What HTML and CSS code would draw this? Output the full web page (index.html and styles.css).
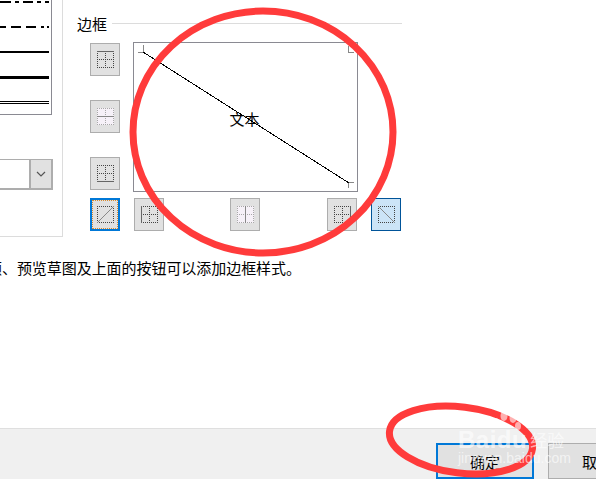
FILE: index.html
```html
<!DOCTYPE html>
<html lang="zh-CN">
<head>
    <meta charset="UTF-8">
    <meta name="viewport" content="width=device-width, initial-scale=1.0">
    <title>边框</title>
    <link rel="stylesheet" href="styles.css">
</head>
<body>
    <svg class="defs" width="0" height="0">
        <defs>
            <symbol id="grid" viewBox="0 0 17 17">
                <path d="M0 .5H17M0 16.500H17M.5 0V17M16.500 0V17M8.500 0V17M0 8.500H17" fill="none" stroke="currentColor" stroke-dasharray="1 1"/>
            </symbol>
            <symbol id="box" viewBox="0 0 17 17">
                <path d="M0 .5H17M0 16.500H17M.5 0V17M16.500 0V17" fill="none" stroke="currentColor" stroke-dasharray="1 1"/>
            </symbol>
        </defs>
    </svg>

    <div class="dialog">
        <div class="content">
            <div class="left-col">
                <div class="style-group">
                    <div class="line-list">
                        <svg width="49" height="106" viewBox="0 0 49 106">
                            <path d="M0 2H11M15 2H19M23 2H33M37 2H41M45 2H49" stroke="#000" stroke-width="2"/>
                            <path d="M0 27H6M11 27H21M26 27H36M41 27H44M47 27H49" stroke="#000" stroke-width="2"/>
                            <path d="M0 52H49" stroke="#000" stroke-width="2"/>
                            <path d="M0 77.5H49" stroke="#000" stroke-width="3"/>
                            <path d="M0 101.5H49M0 103.5H49" stroke="#000"/>
                        </svg>
                    </div>
                    <div class="combo">
                        <span class="combo-arrow">
                            <svg width="10" height="6" viewBox="0 0 10 6"><path d="M1 1L5 5L9 1" fill="none" stroke="#555" stroke-width="1.2"/></svg>
                        </span>
                    </div>
                </div>
                <p class="hint">颜、预览草图及上面的按钮可以添加边框样式。</p>
            </div>

            <div class="border-group">
                <div class="legend"><span>边框</span><i class="rule"></i></div>
                <div class="preview-row">
                    <div class="side-buttons">
                        <button class="icon-btn">
                            <svg width="17" height="17"><use href="#grid"/><path d="M0 .5H17" stroke="#666"/></svg>
                        </button>
                        <button class="icon-btn off">
                            <svg width="17" height="17"><rect width="17" height="17" fill="#f6f1f8"/><use href="#grid"/><path d="M0 8.500H17" stroke="#888"/></svg>
                        </button>
                        <button class="icon-btn">
                            <svg width="17" height="17"><use href="#grid"/><path d="M0 16.500H17" stroke="#666"/></svg>
                        </button>
                    </div>
                    <div class="preview">
                        <svg class="preview-lines" width="223" height="148" viewBox="0 0 223 148">
                            <path d="M9.500 2V10M4 9.500H10" stroke="#888" fill="none"/>
                            <path d="M214.500 3V9.500H220" stroke="#888" fill="none"/>
                            <path d="M220 139.500H214.500V145" stroke="#888" fill="none"/>
                            <path d="M9 9L215 140" stroke="#000" fill="none"/>
                        </svg>
                        <span class="preview-text">文本</span>
                    </div>
                </div>
                <div class="bottom-buttons">
                    <button class="icon-btn focused">
                        <svg width="17" height="17"><use href="#box"/><path d="M0 17L17 0" stroke="#888"/></svg>
                    </button>
                    <button class="icon-btn b-left">
                        <svg width="17" height="17"><use href="#grid"/><path d="M.5 0V17" stroke="#666"/></svg>
                    </button>
                    <button class="icon-btn off b-mid">
                        <svg width="17" height="17"><rect width="17" height="17" fill="#f6f1f8"/><use href="#grid"/><path d="M8.500 0V17" stroke="#888"/></svg>
                    </button>
                    <button class="icon-btn b-right">
                        <svg width="17" height="17"><use href="#grid"/><path d="M16.500 0V17" stroke="#666"/></svg>
                    </button>
                    <button class="icon-btn active">
                        <svg width="17" height="17"><use href="#box"/><path d="M0 0L17 17" stroke="#888"/></svg>
                    </button>
                </div>
            </div>
        </div>

        <div class="footer">
            <button class="dlg-btn primary">确定</button>
            <button class="dlg-btn">取消</button>
        </div>
    </div>

    <!-- screenshot annotations on top of the dialog -->
    <svg class="marks" width="596" height="479" viewBox="0 0 596 479">
        <ellipse cx="263" cy="132" rx="130" ry="121" fill="none" stroke="#ff3b3b" stroke-width="7"/>
        <ellipse cx="461" cy="440" rx="72" ry="33" transform="rotate(7 461 440)" fill="none" stroke="#ff3b3b" stroke-width="7"/>
        <g fill="#fff" fill-opacity=".6">
            <ellipse cx="496" cy="423" rx="3.500" ry="5"/>
            <ellipse cx="504" cy="416" rx="3.500" ry="5"/>
            <ellipse cx="513" cy="418" rx="3.500" ry="5"/>
            <ellipse cx="518" cy="426" rx="3" ry="4"/>
        </g>
    </svg>
    <div class="watermark">
        <div class="wm-top"><span class="wm-logo">Baidu</span><span class="wm-cn">经验</span></div>
        <div class="wm-url">jingyan.baidu.com</div>
    </div>
</body>
</html>
```

FILE: styles.css
```css
html, body {
    margin: 0;
    padding: 0;
}
body {
    position: relative;
    width: 596px;
    height: 479px;
    overflow: hidden;
    background: #fff;
    color: #000;
    font-family: "Noto Sans CJK SC", "Liberation Sans", sans-serif;
    font-size: 15px;
}
.defs {
    position: absolute;
}
button {
    font-family: inherit;
    padding: 0;
}
.dialog {
    display: flex;
    flex-direction: column;
    height: 479px;
}
.content {
    display: flex;
    height: 430px;
}
.left-col {
    width: 64px;
    flex: none;
}
.style-group {
    width: 63px;
    height: 237px;
    box-sizing: border-box;
    border-right: 1px solid #dcdcdc;
    border-bottom: 1px solid #dcdcdc;
}
.line-list {
    width: 52px;
    height: 115px;
    box-sizing: border-box;
    border-right: 1px solid #8a8a92;
    border-bottom: 1px solid #8a8a92;
}
.line-list svg {
    display: block;
}
.combo {
    display: flex;
    justify-content: flex-end;
    width: 53px;
    height: 31px;
    margin-top: 44px;
    box-sizing: border-box;
    border: 2px solid #adadad;
    border-left: none;
    border-width: 1px 2px 2px 0;
}
.combo-arrow {
    display: flex;
    align-items: center;
    justify-content: center;
    width: 20px;
    background: #e1e1e1;
    border-left: 2px solid #adadad;
}
.hint {
    margin: 20px 0 0;
    width: 330px;
    line-height: 22px;
    text-indent: -13px;
    letter-spacing: -0.05px;
    white-space: nowrap;
}
.border-group {
    width: 326px;
    margin-left: 13px;
    padding-top: 12px;
}
.legend {
    display: flex;
    align-items: center;
    gap: 5px;
    height: 22px;
    font-size: 15px;
    width: 325px;
}
.rule {
    flex: 1;
    height: 1px;
    background: #dcdcdc;
}
.preview-row {
    display: flex;
    gap: 13px;
    margin-top: 8px;
    margin-left: 13px;
}
.side-buttons {
    display: flex;
    flex-direction: column;
    gap: 24px;
    padding-top: 1px;
}
.icon-btn {
    display: flex;
    align-items: center;
    justify-content: center;
    flex: none;
    width: 30px;
    height: 33px;
    box-sizing: border-box;
    background: #e1e1e1;
    border: 1px solid #adadad;
    color: #444;
}
.icon-btn svg {
    display: block;
    shape-rendering: crispEdges;
}
.icon-btn.off {
    color: #a8a8a8;
}
.icon-btn.focused {
    border: 2px solid #0078d7;
    outline: 1px dotted #d9892c;
    outline-offset: -3px;
}
.icon-btn.active {
    background: #cce4f7;
    border-color: #005499;
    margin-left: 14px;
}
.b-left {
    margin-left: 14px;
}
.b-mid {
    margin-left: 66px;
}
.b-right {
    margin-left: 67px;
}
.preview {
    position: relative;
    display: flex;
    align-items: center;
    justify-content: center;
    width: 225px;
    height: 150px;
    box-sizing: border-box;
    border: 1px solid #8a8a92;
}
.preview-lines {
    position: absolute;
    left: 0;
    top: 0;
    shape-rendering: crispEdges;
}
.preview-text {
    position: relative;
    top: 1px;
    left: -1px;
}
.bottom-buttons {
    display: flex;
    margin-top: 6px;
    margin-left: 13px;
}
.footer {
    display: flex;
    gap: 14px;
    flex: 1;
    padding: 14px 0 0 436px;
    background: #f0f0f0;
    border-top: 1px solid #dfdfdf;
}
.dlg-btn {
    flex: none;
    width: 98px;
    height: 36px;
    box-sizing: border-box;
    background: #e1e1e1;
    border: 1px solid #adadad;
    font-size: 15px;
    text-align: center;
}
.dlg-btn.primary {
    border: 2px solid #0078d7;
}
.marks {
    position: absolute;
    left: 0;
    top: 0;
}
.watermark {
    position: absolute;
    left: 458px;
    top: 427px;
    color: rgba(255, 255, 255, 0.62);
    white-space: nowrap;
}
.wm-top {
    display: flex;
    align-items: center;
    gap: 3px;
    height: 25px;
}
.wm-logo {
    font-family: "Liberation Sans", sans-serif;
    font-size: 24px;
    font-weight: bold;
    letter-spacing: 0.5px;
}
.wm-cn {
    font-size: 17px;
}
.wm-url {
    font-family: "Liberation Sans", sans-serif;
    font-size: 14px;
    line-height: 13px;
}
```
